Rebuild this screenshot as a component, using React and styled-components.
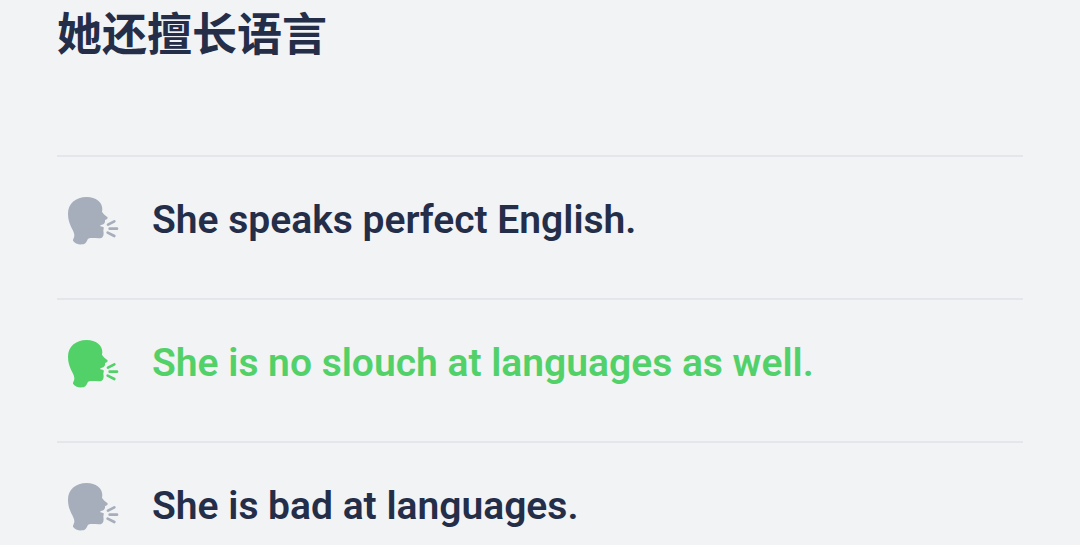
import React from "react";
import styled, { createGlobalStyle } from "styled-components";

const GlobalStyle = createGlobalStyle`
  * { box-sizing: border-box; }
  body { margin: 0; background: #f1f3f5; color: #242e49; font-family: Roboto, "Noto Sans CJK SC", sans-serif; }
`;
const Page = styled.main`padding: 6px 57px 0;`;
const Title = styled.h1`
  margin: 0 0 89px;
  font-size: 45px;
  line-height: 60px;
  font-weight: 700;
`;
const List = styled.ul`margin: 0; padding: 0; list-style: none;`;
const Item = styled.li`border-top: 2px solid #e4e6eb;`;
const Answer = styled.button`
  display: flex;
  align-items: center;
  width: 100%;
  height: 141px;
  padding: 0 10px 15px;
  gap: 32px;
  border: 0;
  background: none;
  font: 600 39px/48px Roboto, sans-serif;
  text-align: left;
  color: ${(p) => (p.$correct ? "#52d169" : "#242e49")};
`;
const Icon = styled.svg`
  flex: none;
  width: 53px;
  height: 50px;
  color: ${(p) => (p.$correct ? "#52d169" : "#a6aebb")};
`;

function SpeakingHead({ correct }) {
  return (
    <Icon $correct={correct} viewBox="21 30 159 150" aria-hidden="true">
      <path
        fill="currentColor"
        d="M80 36C108 36 127 51 127 73L126 80C129 87 137 91 142 96C145 100 141 103 135 105C136 110 134 115 130 118L121 121L121 124L130 126C133 129 130 133 130 137C133 153 128 160 116 160C104 160 96 158 84 161C80 169 77 177 68 178C56 180 44 175 39 167C38 162 44 158 43 150C42 134 24 120 24 86C24 56 47 36 80 36Z"
      />
      <path
        fill="none"
        stroke="currentColor"
        strokeWidth="8"
        strokeLinecap="round"
        d="M144 119L163 109M149 131L171 131M143 143L163 153"
      />
    </Icon>
  );
}

const answers = [
  { text: "She speaks perfect English." },
  { text: "She is no slouch at languages as well.", correct: true },
  { text: "She is bad at languages." },
];

export default function App() {
  return (
    <Page>
      <GlobalStyle />
      <Title lang="zh-CN">她还擅长语言</Title>
      <List>
        {answers.map((a) => (
          <Item key={a.text}>
            <Answer type="button" $correct={a.correct}>
              <SpeakingHead correct={a.correct} />
              <span>{a.text}</span>
            </Answer>
          </Item>
        ))}
      </List>
    </Page>
  );
}
